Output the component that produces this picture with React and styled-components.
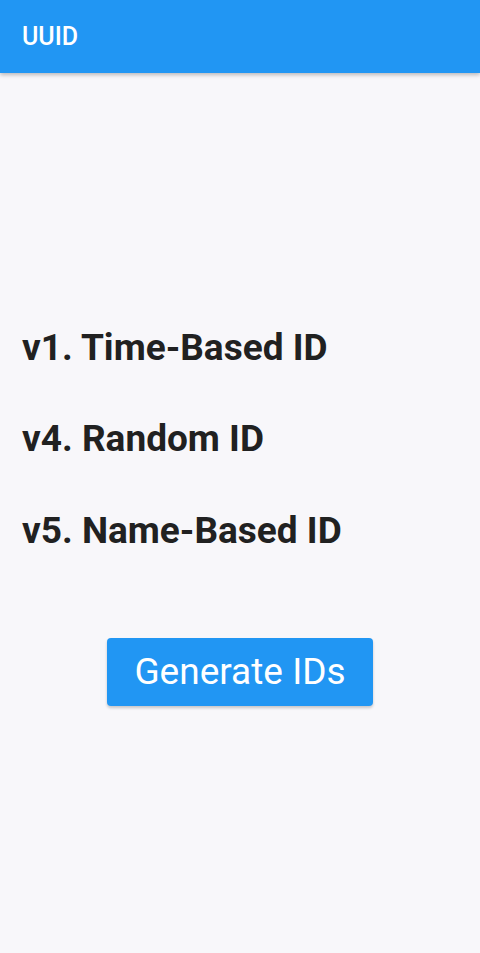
import React from 'react';
import styled, { createGlobalStyle } from 'styled-components';

const GlobalStyle = createGlobalStyle`
  html, body {
    margin: 0;
    padding: 0;
    background: #f8f7fa;
    font-family: Roboto, "Noto Sans", sans-serif;
  }
`;

const Page = styled.div`
  display: flex;
  flex-direction: column;
  height: 953px;
`;

const AppBar = styled.header`
  height: 73px;
  flex-shrink: 0;
  display: flex;
  align-items: center;
  padding: 0 22px;
  background: #2196f3;
  color: #fff;
  font-size: 25px;
  font-weight: 500;
  box-shadow: 0 2px 4px rgba(0, 0, 0, 0.25);
  position: relative;
  z-index: 1;
`;

const Body = styled.main`
  flex: 1;
  display: flex;
  flex-direction: column;
  justify-content: center;
  padding: 0 22px 19px;
`;

const IdLine = styled.div`
  height: 91.5px;
  display: flex;
  align-items: center;
  font-size: 37px;
  font-weight: 700;
  color: #212121;
`;

const Actions = styled.div`
  display: flex;
  justify-content: center;
  margin-top: 62px;
`;

const Button = styled.button`
  width: 266px;
  height: 68px;
  border: none;
  border-radius: 4px;
  background: #2196f3;
  color: #fff;
  font-family: Roboto, sans-serif;
  font-size: 37px;
  font-weight: 400;
  box-shadow: 0 2px 3px rgba(0, 0, 0, 0.2);
  cursor: pointer;
`;

const ids = ['v1. Time-Based ID', 'v4. Random ID', 'v5. Name-Based ID'];

export default function App() {
  return (
    <Page>
      <GlobalStyle />
      <AppBar>UUID</AppBar>
      <Body>
        {ids.map((id) => (
          <IdLine key={id}>{id}</IdLine>
        ))}
        <Actions>
          <Button>Generate IDs</Button>
        </Actions>
      </Body>
    </Page>
  );
}
